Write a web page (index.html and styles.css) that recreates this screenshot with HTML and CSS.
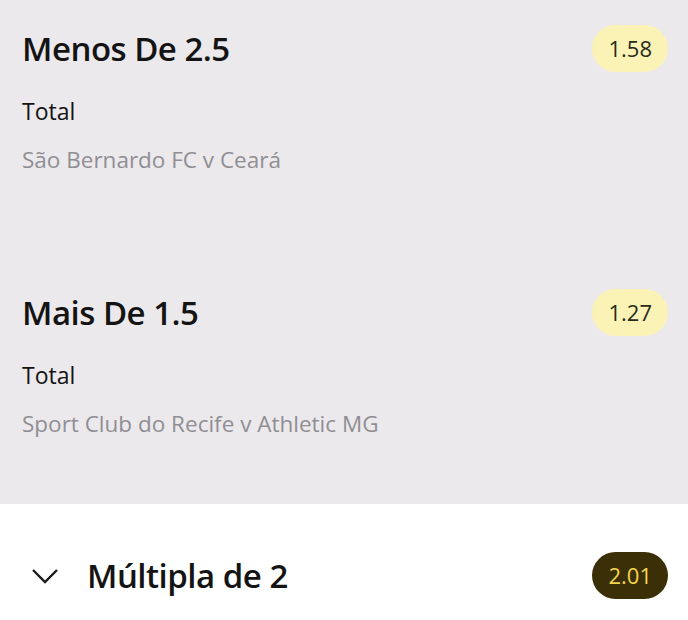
FILE: index.html
```html
<!DOCTYPE html>
<html lang="pt">
  <head>
    <meta charset="UTF-8" />
    <title>Boletim</title>
    <link rel="stylesheet" href="styles.css">
  </head>
  <body>
    <div class="selections">
      <div class="selection">
        <div class="selection-top">
          <h2>Menos De 2.5</h2>
          <span class="odds">1.58</span>
        </div>
        <div class="market">Total</div>
        <div class="event">São Bernardo FC v Ceará</div>
      </div>
      <div class="selection">
        <div class="selection-top">
          <h2>Mais De 1.5</h2>
          <span class="odds">1.27</span>
        </div>
        <div class="market">Total</div>
        <div class="event">Sport Club do Recife v Athletic MG</div>
      </div>
    </div>

    <div class="multiple">
      <svg class="chevron" width="28" height="18" viewBox="0 0 28 18">
        <path d="M2 3 L14 15 L26 3" fill="none" stroke="#1a1a1a" stroke-width="2.4" />
      </svg>
      <h2>Múltipla de 2</h2>
      <span class="odds odds-dark">2.01</span>
    </div>
  </body>
</html>
```

FILE: styles.css
```css
body {
  margin: 0;
  font-family: 'Open Sans', sans-serif;
  background: #fff;
  color: #141414;
}

.selections {
  background: #ebe9ec;
  padding: 25px 20px 0 22px;
  height: 479px;
}

.selection {
  height: 264px;
}

.selection-top {
  display: flex;
  align-items: center;
  justify-content: space-between;
}

h2 {
  margin: 0;
  font-size: 33px;
  font-weight: 600;
  letter-spacing: -0.5px;
}

.odds {
  background: #fbf3b5;
  border-radius: 24px;
  padding: 0 16px;
  height: 47px;
  line-height: 47px;
  font-size: 22px;
  color: #2a2a1c;
}

.market {
  font-size: 23px;
  margin-top: 23px;
}

.event {
  font-size: 22.5px;
  color: #908e93;
  margin-top: 17px;
}

.multiple {
  display: flex;
  align-items: center;
  padding: 48px 20px 0 31px;
}

.chevron {
  margin-right: 28px;
}

.multiple h2 {
  flex: 1;
}

.odds-dark {
  background: #3a2f07;
  color: #f3d54e;
}
```
